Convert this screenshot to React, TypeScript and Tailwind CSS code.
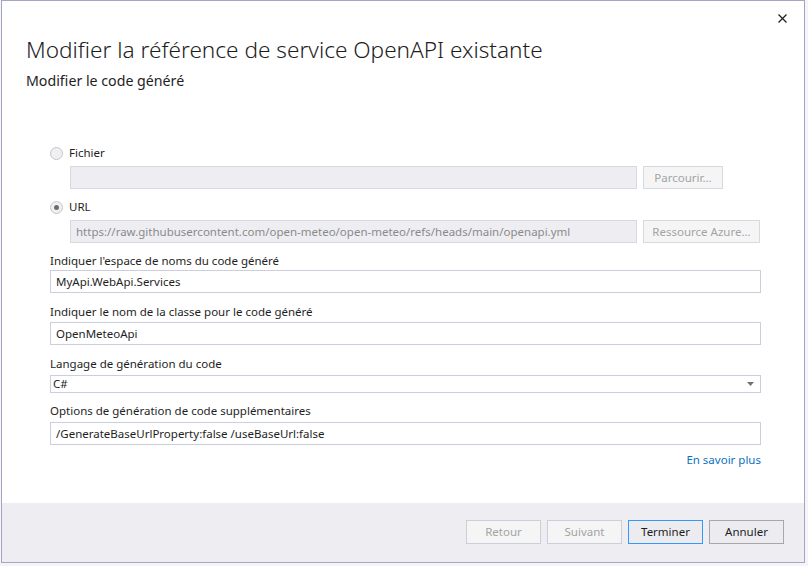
import React from "react";

const font = { fontFamily: '"Segoe UI", "Noto Sans", sans-serif' };

function Radio({ checked }: { checked?: boolean }) {
  return (
    <span className="flex h-[13px] w-[13px] items-center justify-center rounded-full border border-[#c4c4cc] bg-[#f0f0f2]">
      {checked && <span className="h-[5px] w-[5px] rounded-full bg-[#6d6d6d]" />}
    </span>
  );
}

function Field({ value, disabled, className = "" }: { value?: string; disabled?: boolean; className?: string }) {
  return (
    <div
      className={`flex h-[23px] items-center border px-[5px] text-[11.5px] ${
        disabled ? "border-[#d8d8e0] bg-[#eeeef2] text-[#8a8a8a]" : "border-[#ccceDB] bg-white text-[#1e1e1e]"
      } ${className}`}
    >
      {value}
    </div>
  );
}

function SideButton({ label, width }: { label: string; width: string }) {
  return (
    <div className={`flex h-[23px] ${width} items-center justify-center border border-[#d8d8e0] bg-[#f5f5f5] text-[11.5px] text-[#a2a4a5]`}>
      {label}
    </div>
  );
}

function Label({ children }: { children: React.ReactNode }) {
  return <div className="h-[17px] text-[11.5px] leading-[17px] text-[#1e1e1e]">{children}</div>;
}

function FooterButton({ label, kind }: { label: string; kind: "disabled" | "primary" | "normal" }) {
  const styles = {
    disabled: "border-[#ccceDB] bg-[#f5f5f5] text-[#a2a4a5]",
    primary: "border-[#3399ff] bg-[#ececf0] text-[#1e1e1e]",
    normal: "border-[#a8a8a8] bg-[#ececf0] text-[#1e1e1e]",
  }[kind];
  return (
    <div className={`flex h-[24px] w-[75px] items-center justify-center border text-[11.5px] ${styles}`}>
      {label}
    </div>
  );
}

export default function App() {
  return (
    <div className="h-[566px] w-[808px] bg-[#f5f5f7] pl-[1px]" style={font}>
      <div className="flex h-[563px] w-[804px] flex-col border border-[#a4a4c4] bg-white">
        <div className="flex justify-end pr-[16px] pt-[12px]">
          <svg width="11" height="11" viewBox="0 0 11 11">
            <path d="M1.5 1.5 L9.5 9.5 M9.5 1.5 L1.5 9.5" stroke="#1e1e1e" strokeWidth="1.2" />
          </svg>
        </div>
        <div className="pl-[24px] pt-[11px] text-[22.6px] font-light leading-[30px] text-[#1e1e1e]">
          Modifier la référence de service OpenAPI existante
        </div>
        <div className="pl-[24px] pt-[6px] text-[14.2px] leading-[20px] text-[#1e1e1e]">Modifier le code généré</div>

        <div className="flex flex-1 flex-col pl-[48px] pr-[43px] pt-[54px]">
          <div className="flex h-[16px] items-center gap-[6px]">
            <Radio />
            <span className="text-[11.5px] text-[#1e1e1e]">Fichier</span>
          </div>
          <div className="mt-[5px] flex gap-[6px] pl-[20px]">
            <Field disabled className="w-[567px]" />
            <SideButton label="Parcourir..." width="w-[80px]" />
          </div>
          <div className="mt-[10px] flex h-[16px] items-center gap-[6px]">
            <Radio checked />
            <span className="text-[11.5px] text-[#1e1e1e]">URL</span>
          </div>
          <div className="mt-[5px] flex gap-[6px] pl-[20px]">
            <Field
              disabled
              className="w-[567px]"
              value="https://raw.githubusercontent.com/open-meteo/open-meteo/refs/heads/main/openapi.yml"
            />
            <SideButton label="Ressource Azure..." width="w-[117px]" />
          </div>

          <div className="mt-[9px]">
            <Label>Indiquer l'espace de noms du code généré</Label>
          </div>
          <Field className="mt-[1px]" value="MyApi.WebApi.Services" />

          <div className="mt-[10px]">
            <Label>Indiquer le nom de la classe pour le code généré</Label>
          </div>
          <Field className="mt-[2px]" value="OpenMeteoApi" />

          <div className="mt-[10px]">
            <Label>Langage de génération du code</Label>
          </div>
          <div className="mt-[3px] flex h-[18px] items-center justify-between border border-[#ccceDB] pl-[2px] pr-[6px] text-[11.5px] text-[#1e1e1e]">
            <span>C#</span>
            <svg width="7" height="4" viewBox="0 0 7 4">
              <path d="M0 0 H7 L3.5 4 Z" fill="#717171" />
            </svg>
          </div>

          <div className="mt-[9px]">
            <Label>Options de génération de code supplémentaires</Label>
          </div>
          <Field className="mt-[3px]" value="/GenerateBaseUrlProperty:false /useBaseUrl:false" />

          <div className="mt-[6px] flex justify-end">
            <span className="text-[11.5px] leading-[17px] text-[#0e70c0]">En savoir plus</span>
          </div>
        </div>

        <div className="flex h-[59px] items-start justify-end gap-[6px] bg-[#eeeef2] pr-[20px] pt-[17px]">
          <FooterButton label="Retour" kind="disabled" />
          <FooterButton label="Suivant" kind="disabled" />
          <FooterButton label="Terminer" kind="primary" />
          <FooterButton label="Annuler" kind="normal" />
        </div>
      </div>
    </div>
  );
}
